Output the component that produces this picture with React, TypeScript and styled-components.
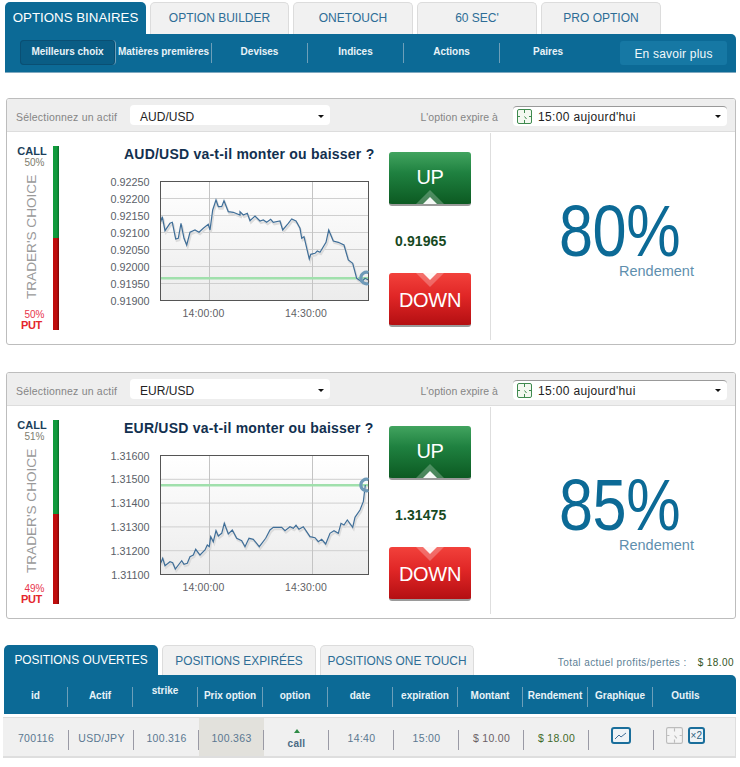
import React from "react";
import styled, { createGlobalStyle } from "styled-components";

const Global = createGlobalStyle`
  html, body { margin: 0; padding: 0; background: #fff; }
  body { font-family: "Liberation Sans", Arial, sans-serif; }
  * { box-sizing: border-box; }
`;

const Page = styled.div`
  width: 740px;
  height: 767px;
  overflow: hidden;
  padding-top: 2px;
`;

const TabRow = styled.div`
  display: flex;
  gap: 4px;
  align-items: flex-end;
`;
const TopTabs = styled(TabRow)`
  padding-left: 5px;
  height: 32px;
`;
const Tab = styled.div<{ $w: number; $active?: boolean; $big?: boolean }>`
  width: ${(p) => p.$w}px;
  height: 32px;
  border-radius: 5px 5px 0 0;
  display: flex;
  align-items: center;
  justify-content: center;
  font-size: ${(p) => (p.$big ? 13.3 : 12)}px;
  color: ${(p) => (p.$active ? "#fff" : "#2d6d96")};
  background: ${(p) => (p.$active ? "#0c6a96" : "#f1f1f1")};
  border: ${(p) => (p.$active ? "none" : "1px solid #dcdcdc")};
  border-bottom: none;
  padding-bottom: 2px;
`;
const NavBar = styled.div`
  margin-left: 5px;
  width: 731px;
  height: 39px;
  background: #0c6a96;
  border-radius: 0 5px 0 0;
  border-bottom: 1px solid #7fa9c0;
  display: flex;
  align-items: flex-start;
`;
const NavItem = styled.div<{ $active?: boolean }>`
  width: 96px;
  height: ${(p) => (p.$active ? 25 : 20)}px;
  margin-top: ${(p) => (p.$active ? 6 : 9)}px;
  display: flex;
  align-items: center;
  justify-content: center;
  white-space: nowrap;
  padding-bottom: ${(p) => (p.$active ? 3 : 4)}px;
  font-size: 10px;
  font-weight: bold;
  color: #e8f3f8;
  border-right: 1px solid #6d9fb9;
  background: ${(p) => (p.$active ? "#0a5d85" : "transparent")};
  border-radius: ${(p) => (p.$active ? "4px" : "0")};
  box-shadow: ${(p) => (p.$active ? "inset 0 0 0 1px #0a4f73" : "none")};
`;
const NavItemPlain = styled(NavItem)`
  border-right: none;
`;
const LearnMore = styled.div`
  margin: 7px 0 0 24px;
  width: 107px;
  height: 24px;
  border-radius: 3px;
  background: #1678a4;
  color: #f2f8fb;
  font-size: 12px;
  letter-spacing: 0.2px;
  display: flex;
  align-items: center;
  justify-content: center;
  padding-top: 1px;
`;
const NavLead = styled.div`
  width: 15px;
`;

const Panel = styled.section<{ $top: number }>`
  margin: ${(p) => p.$top}px 4px 0 6px;
  width: 730px;
  height: 247px;
  border: 1px solid #bdbdbd;
  border-radius: 3px;
  overflow: hidden;
`;
const PanelHeader = styled.div`
  height: 33px;
  background: #eeeeee;
  border-bottom: 1px solid #dddddd;
  display: flex;
  align-items: center;
  padding: 4px 8px 0 9px;
  font-size: 10.5px;
  color: #858585;
`;
const AssetLabel = styled.span`
  letter-spacing: 0.2px;
`;
const AssetSelect = styled.div`
  margin: -4px 0 0 13px;
  width: 200px;
  height: 20px;
  background: #fff;
  border-radius: 4px;
  display: flex;
  align-items: center;
  justify-content: space-between;
  padding: 3px 6px 0 10px;
  font-size: 12px;
  color: #222;
`;
const Caret = styled.span`
  width: 0;
  height: 0;
  border-left: 3px solid transparent;
  border-right: 3px solid transparent;
  border-top: 3px solid #111;
`;
const ExpireLabel = styled.span`
  margin-left: auto;
  letter-spacing: 0.05px;
`;
const TimeSelect = styled.div`
  margin: -3px 0 0 15px;
  width: 214px;
  height: 20px;
  background: #fff;
  border-radius: 4px;
  border-top: 1px solid #999;
  display: flex;
  align-items: center;
  gap: 6px;
  padding: 0 6px 0 4px;
  font-size: 12px;
  letter-spacing: 0.35px;
  color: #222;
`;
const TimeText = styled.span`
  flex: 1;
  padding-top: 1px;
`;
const Body = styled.div`
  height: 213px;
  display: flex;
`;
const Gauge = styled.div`
  width: 53px;
  height: 185px;
  margin-top: 14px;
  display: flex;
  flex: none;
`;
const GaugeLabels = styled.div`
  width: 46px;
  margin-top: -1px;
  display: flex;
  flex-direction: column;
  align-items: center;
  padding-left: 4px;
`;
const CallLabel = styled.div`
  font-size: 11px;
  font-weight: bold;
  color: #1c3f5a;
  line-height: 12px;
`;
const PctLabel = styled.div<{ $red?: boolean }>`
  font-size: 10px;
  line-height: 11px;
  margin-left: 5px;
  color: ${(p) => (p.$red ? "#e8354a" : "#7d7d6d")};
`;
const Vertical = styled.div`
  flex: 1;
  writing-mode: vertical-rl;
  transform: rotate(180deg);
  white-space: nowrap;
  font-size: 13.6px;
  color: #9a9a9a;
  text-align: left;
  line-height: 20px;
  padding-top: 10px;
`;
const PutLabel = styled.div`
  font-size: 11px;
  letter-spacing: -0.4px;
  font-weight: bold;
  color: #e4262c;
  line-height: 11px;
  margin-left: -1px;
`;
const Bar = styled.div`
  width: 6px;
  height: 184px;
  display: flex;
  flex-direction: column;
`;
const BarPart = styled.div<{ $color: string; $edge: string; $grow: number }>`
  flex: ${(p) => p.$grow};
  background: linear-gradient(90deg, ${(p) => p.$color} 60%, ${(p) => p.$edge});
`;
const ChartCol = styled.div`
  width: 322px;
  flex: none;
`;
const Title = styled.h3`
  margin: 14px 0 0 64px;
  font-size: 14px;
  line-height: 16px;
  letter-spacing: 0.22px;
  font-weight: bold;
  color: #12304f;
  white-space: nowrap;
`;
const ChartSvg = styled.svg`
  display: block;
  margin-top: 8px;
  font-family: "Liberation Sans", Arial, sans-serif;
`;
const ActionCol = styled.div`
  width: 82px;
  margin-left: 7px;
  margin-top: 20px;
  flex: none;
  display: flex;
  flex-direction: column;
`;
const Trade = styled.div<{ $up?: boolean }>`
  position: relative;
  width: 82px;
  height: 54px;
  border-radius: 3px;
  overflow: hidden;
  color: #fff;
  font-size: 20px;
  letter-spacing: -0.3px;
  display: flex;
  justify-content: center;
  padding-top: ${(p) => (p.$up ? 13 : 15)}px;
  line-height: 24px;
  background: ${(p) =>
    p.$up
      ? "linear-gradient(180deg,#42a45f 0%,#1f8140 40%,#0c5a22 100%)"
      : "linear-gradient(180deg,#f2413b 0%,#e02626 45%,#b40f12 100%)"};
  border-bottom: 2px solid #9a9a9a;
`;
const Arrow = styled.svg<{ $up?: boolean }>`
  position: absolute;
  left: 26px;
  ${(p) => (p.$up ? "bottom: 0;" : "top: 0;")}
`;
const Price = styled.div`
  height: 67px;
  display: flex;
  align-items: center;
  padding: 2px 0 0 6px;
  font-size: 14px;
  font-weight: bold;
  color: #17491f;
  letter-spacing: 0.1px;
`;
const Payout = styled.div`
  margin: 1px 0 5px 19px;
  border-left: 1px solid #dedede;
  flex: 1;
  display: flex;
  flex-direction: column;
  padding: 67px 0 0 68px;
`;
const Percent = styled.div`
  font-size: 72px;
  line-height: 62px;
  letter-spacing: -0.5px;
  color: #0c6a96;
  transform: scaleX(0.85);
  transform-origin: left center;
  white-space: nowrap;
`;
const PayoutLabel = styled.div`
  font-size: 14.5px;
  line-height: 16px;
  color: #5f8fae;
  margin: 1px 0 0 60px;
`;

const BottomTabs = styled(TabRow)`
  margin-top: 26px;
  padding-left: 4px;
  height: 30px;
`;
const PosTab = styled.div<{ $active?: boolean }>`
  width: 154px;
  height: 30px;
  border-radius: 5px 5px 0 0;
  display: flex;
  align-items: center;
  justify-content: center;
  font-size: 11.9px;
  white-space: nowrap;
  color: ${(p) => (p.$active ? "#fff" : "#2d6d96")};
  background: ${(p) => (p.$active ? "#0c6a96" : "#f1f1f1")};
  border: ${(p) => (p.$active ? "none" : "1px solid #dcdcdc")};
  border-bottom: none;
`;
const Total = styled.div`
  margin-left: auto;
  margin-right: 6px;
  align-self: center;
  padding-top: 4px;
  font-size: 10px;
  letter-spacing: 0.42px;
  color: #5d7f96;
  display: flex;
  gap: 11px;
`;
const Gain = styled.span`
  color: #33551f;
`;
const HeaderBar = styled.div`
  margin-left: 4px;
  width: 732px;
  height: 39px;
  background: #0c6a96;
  border-radius: 0 5px 0 0;
  display: grid;
  grid-template-columns: 64px repeat(10, 65px);
  align-items: start;
`;
const HeadCell = styled.div<{ $high?: boolean; $last?: boolean }>`
  height: 20px;
  margin-top: 12px;
  display: flex;
  align-items: ${(p) => (p.$high ? "flex-start" : "center")};
  justify-content: center;
  line-height: ${(p) => (p.$high ? "8px" : "12px")};
  padding-bottom: 3px;
  font-size: 10px;
  font-weight: bold;
  color: #e8f3f8;
  white-space: nowrap;
  border-right: ${(p) => (p.$last ? "none" : "1px solid #6d9fb9")};
`;
const DataRow = styled.div`
  margin: 3px 0 0 3px;
  width: 733px;
  height: 41px;
  background: #f0f0f0;
  border: 1px solid #dedede;
  border-width: 1px 1px 2px 0;
  display: grid;
  grid-template-columns: 66px repeat(10, 65px);
`;
const DataCell = styled.div<{ $tint?: boolean; $last?: boolean; $gain?: boolean; $money?: boolean }>`
  position: relative;
  display: flex;
  align-items: center;
  justify-content: center;
  gap: 5px;
  padding-top: 2px;
  font-size: 10.5px;
  letter-spacing: 0.3px;
  color: ${(p) => (p.$gain ? "#3f6a2a" : p.$money ? "#6b5f66" : "#5a7891")};
  background: ${(p) => (p.$tint ? "#e2e1dc" : "transparent")};
  &::after {
    content: "";
    display: ${(p) => (p.$last ? "none" : "block")};
    position: absolute;
    right: 0;
    top: 12px;
    height: 20px;
    width: 1px;
    background: #9a9aa5;
  }
`;
const CallCell = styled(DataCell)`
  flex-direction: column;
  gap: 5px;
  font-size: 10px;
  font-weight: bold;
  color: #4a6a84;
  padding-top: 3px;
`;
const IconCell = styled(DataCell)`
  padding: 0 2px 3px 0;
`;
const UpMark = styled.span`
  width: 0;
  height: 0;
  border-left: 3.5px solid transparent;
  border-right: 3.5px solid transparent;
  border-bottom: 4px solid #2e8b45;
`;

type P = [number, number];
const a1L: P[] = [[482,260],[487,245],[495,287],[510,265],[517,262],[527,312],[535,310],[543,265],[552,310],[560,330],[570,292],[585,285],[597,292],[610,280],[625,268],[630,285],[638,225],[648,195],[655,215],[665,215],[672,197],[685,230],[700,232],[720,240]];
const a1R: P[] = [[0,230],[10,240],[22,235],[30,257],[45,243],[60,258],[70,255],[80,262],[92,253],[100,262],[120,258],[128,285],[145,265],[155,252],[168,258],[180,280],[185,310],[192,305],[208,372],[212,358],[225,355],[232,348],[240,352],[258,322],[266,285],[280,318],[295,322],[312,330],[325,375],[338,385],[350,430],[365,440],[375,430],[385,435]];
const a2: P[] = [[182,460],[188,445],[195,467],[210,455],[218,458],[226,477],[245,452],[252,463],[262,460],[270,440],[280,435],[287,418],[300,435],[315,420],[322,405],[328,410],[332,380],[340,395],[348,362],[355,378],[365,370],[373,340],[385,372],[397,360],[410,385],[425,392],[435,410],[447,385],[460,388],[478,410],[497,385],[510,360],[520,352],[545,352],[555,362],[570,350],[580,355],[588,346],[597,358],[610,350],[630,380],[645,383],[655,395],[665,388],[677,402],[690,370],[702,362],[715,370],[723,340],[732,345],[742,330],[758,352],[765,322],[780,300],[790,275],[796,225]];

// svg origin is at page (60, 170) for panel 1, (60, 444) for panel 2
const audLine: P[] = [
  ...a1L.map(([x, y]): P => [x / 3 - 60, y / 3 + 135 - 170]),
  ...a1R.map(([x, y]): P => [x / 3 + 240 - 60, y / 3 + 135 - 170]),
];
const eurLine: P[] = a2.map(([x, y]): P => [x / 3 + 100 - 60, y / 3 + 410 - 444]);
const toD = (pts: P[]) => pts.map(([x, y], i) => `${i ? "L" : "M"}${x.toFixed(1)} ${y.toFixed(1)}`).join(" ");

function Chart({ id, labels, line, target }: { id: string; labels: string[]; line: P[]; target: number }) {
  const left = 100.5;
  const right = 308.5;
  const top = 11.5;
  const bottom = 130.5;
  const step = (bottom - top) / (labels.length - 1);
  return (
    <ChartSvg width={322} height={156} viewBox="0 0 322 156">
      <defs>
        <linearGradient id={id} x1="0" x2="0" y1="0" y2="1">
          <stop offset="0" stopColor="#ffffff" />
          <stop offset="1" stopColor="#ececec" />
        </linearGradient>
      </defs>
      <rect x={left} y={top} width={right - left} height={bottom - top} fill={`url(#${id})`} />
      {labels.map((l, i) => (
        <React.Fragment key={l}>
          {i > 0 && i < labels.length - 1 && (
            <line x1={left} x2={right} y1={top + i * step} y2={top + i * step} stroke="#cfcfcf" />
          )}
          <text x={89.5} y={top + i * step + 4} textAnchor="end" fontSize={10.8} fill="#5a6068">
            {l}
          </text>
        </React.Fragment>
      ))}
      <line x1={149.5} x2={149.5} y1={top} y2={bottom} stroke="#c4c4c4" />
      <line x1={252.5} x2={252.5} y1={top} y2={bottom} stroke="#c4c4c4" />
      <rect x={left} y={target - 1} width={right - left} height={2.5} fill="#a0e0ac" />
      <path d={toD(line)} fill="none" stroke="#dcdcdc" strokeWidth={2} transform="translate(1 2)" />
      <path d={toD(line)} fill="none" stroke="#3f6e98" strokeWidth={1.2} />
      <rect x={left} y={top} width={right - left} height={bottom - top} fill="none" stroke="#555" />
      <path
        d={`M${right} ${target - 5.5} A5.8 5.8 0 1 0 ${right} ${target + 5.5}`}
        fill="none"
        stroke="#6f9ab8"
        strokeWidth={3.2}
      />
      <text x={143.5} y={147} textAnchor="middle" fontSize={10.5} letterSpacing={0.15} fill="#5f5f66">
        14:00:00
      </text>
      <text x={246} y={147} textAnchor="middle" fontSize={10.5} letterSpacing={0.15} fill="#5f5f66">
        14:30:00
      </text>
    </ChartSvg>
  );
}

const ClockIcon = ({ off }: { off?: boolean }) => {
  const c = off ? "#bcbcbc" : "#3f8a4f";
  const s = off ? 17 : 15;
  return (
    <svg width={s} height={s} viewBox="0 0 15 15" fill="none">
      <rect x="0.5" y="0.5" width="14" height="14" rx="1.5" fill={off ? "#f4f4f4" : "#f3f8f0"} stroke={c} />
      <path d="M7.5 1v3M7.5 11v3M1 7.5h2M12 7.5h2M7.5 7.5l2 2.5" stroke={c} />
    </svg>
  );
};

const ArrowShape = ({ up }: { up?: boolean }) => (
  <Arrow $up={up} width={30} height={14} viewBox="0 0 30 14">
    {up ? (
      <>
        <path d="M1 14 15 0l14 14z" fill="#fff" opacity={0.25} />
        <path d="M8 14l7-7 7 7z" fill="#fff" opacity={0.95} />
      </>
    ) : (
      <>
        <path d="M1 0l14 14L29 0z" fill="#fff" opacity={0.25} />
        <path d="M8 0l7 7 7-7z" fill="#fff" opacity={0.95} />
      </>
    )}
  </Arrow>
);

function TradePanel(props: {
  top: number;
  pair: string;
  id: string;
  call: string;
  put: string;
  callShare: number;
  labels: string[];
  line: P[];
  target: number;
  price: string;
  pct: string;
}) {
  return (
    <Panel $top={props.top}>
      <PanelHeader>
        <AssetLabel>Sélectionnez un actif</AssetLabel>
        <AssetSelect>
          {props.pair}
          <Caret />
        </AssetSelect>
        <ExpireLabel>L'option expire à</ExpireLabel>
        <TimeSelect>
          <ClockIcon />
          <TimeText>15:00 aujourd'hui</TimeText>
          <Caret />
        </TimeSelect>
      </PanelHeader>
      <Body>
        <Gauge>
          <GaugeLabels>
            <CallLabel>CALL</CallLabel>
            <PctLabel>{props.call}</PctLabel>
            <Vertical>TRADER'S CHOICE</Vertical>
            <PctLabel $red>{props.put}</PctLabel>
            <PutLabel>PUT</PutLabel>
          </GaugeLabels>
          <Bar>
            <BarPart $color="#109b3c" $edge="#0b6d2b" $grow={props.callShare} />
            <BarPart $color="#c00d0d" $edge="#7c0808" $grow={100 - props.callShare} />
          </Bar>
        </Gauge>
        <ChartCol>
          <Title>{props.pair} va-t-il monter ou baisser ?</Title>
          <Chart id={props.id} labels={props.labels} line={props.line} target={props.target} />
        </ChartCol>
        <ActionCol>
          <Trade $up>
            UP
            <ArrowShape up />
          </Trade>
          <Price>{props.price}</Price>
          <Trade>
            DOWN
            <ArrowShape />
          </Trade>
        </ActionCol>
        <Payout>
          <Percent>{props.pct}</Percent>
          <PayoutLabel>Rendement</PayoutLabel>
        </Payout>
      </Body>
    </Panel>
  );
}

const heads = ["id", "Actif", "strike", "Prix option", "option", "date", "expiration", "Montant", "Rendement", "Graphique", "Outils"];

export default function App() {
  return (
    <Page>
      <Global />
      <TopTabs>
        <Tab $w={141} $active $big>OPTIONS BINAIRES</Tab>
        <Tab $w={139}>OPTION BUILDER</Tab>
        <Tab $w={120}>ONETOUCH</Tab>
        <Tab $w={120}>60 SEC'</Tab>
        <Tab $w={120}>PRO OPTION</Tab>
      </TopTabs>
      <NavBar>
        <NavLead />
        <NavItem $active>Meilleurs choix</NavItem>
        <NavItem>Matières premières</NavItem>
        <NavItem>Devises</NavItem>
        <NavItem>Indices</NavItem>
        <NavItem>Actions</NavItem>
        <NavItemPlain>Paires</NavItemPlain>
        <LearnMore>En savoir plus</LearnMore>
      </NavBar>
      <TradePanel
        top={25}
        pair="AUD/USD"
        id="g1"
        call="50%"
        put="50%"
        callShare={50}
        labels={["0.92250", "0.92200", "0.92150", "0.92100", "0.92050", "0.92000", "0.91950", "0.91900"]}
        line={audLine}
        target={108}
        price="0.91965"
        pct="80%"
      />
      <TradePanel
        top={27}
        pair="EUR/USD"
        id="g2"
        call="51%"
        put="49%"
        callShare={51}
        labels={["1.31600", "1.31500", "1.31400", "1.31300", "1.31200", "1.31100"]}
        line={eurLine}
        target={41}
        price="1.31475"
        pct="85%"
      />
      <BottomTabs>
        <PosTab $active>POSITIONS OUVERTES</PosTab>
        <PosTab>POSITIONS EXPIRÉES</PosTab>
        <PosTab>POSITIONS ONE TOUCH</PosTab>
        <Total>
          <span>Total actuel profits/pertes :</span>
          <Gain>$ 18.00</Gain>
        </Total>
      </BottomTabs>
      <HeaderBar>
        {heads.map((h, i) => (
          <HeadCell key={h} $high={h === "strike"} $last={i === heads.length - 1}>
            {h}
          </HeadCell>
        ))}
      </HeaderBar>
      <DataRow>
        <DataCell>700116</DataCell>
        <DataCell>USD/JPY</DataCell>
        <DataCell>100.316</DataCell>
        <DataCell $tint>100.363</DataCell>
        <CallCell>
          <UpMark />
          call
        </CallCell>
        <DataCell>14:40</DataCell>
        <DataCell>15:00</DataCell>
        <DataCell $money>$ 10.00</DataCell>
        <DataCell $gain>$ 18.00</DataCell>
        <IconCell>
          <svg width="20" height="17" viewBox="0 0 20 17" fill="none">
            <rect x="1" y="1" width="18" height="15" rx="2" fill="#eef3f6" stroke="#1a6e9b" strokeWidth="2" />
            <path d="M4 12l4-4 2 2 5-4" stroke="#3f6e98" />
          </svg>
        </IconCell>
        <IconCell $last>
          <ClockIcon off />
          <svg width="17" height="17" viewBox="0 0 17 17">
            <rect x="1" y="1" width="15" height="15" rx="2" fill="#eef3f6" stroke="#1a6e9b" strokeWidth="2" />
            <text x="8.5" y="12" textAnchor="middle" fontSize="10" fill="#2a5f80" fontFamily="Liberation Sans, Arial, sans-serif">×2</text>
          </svg>
        </IconCell>
      </DataRow>
    </Page>
  );
}
